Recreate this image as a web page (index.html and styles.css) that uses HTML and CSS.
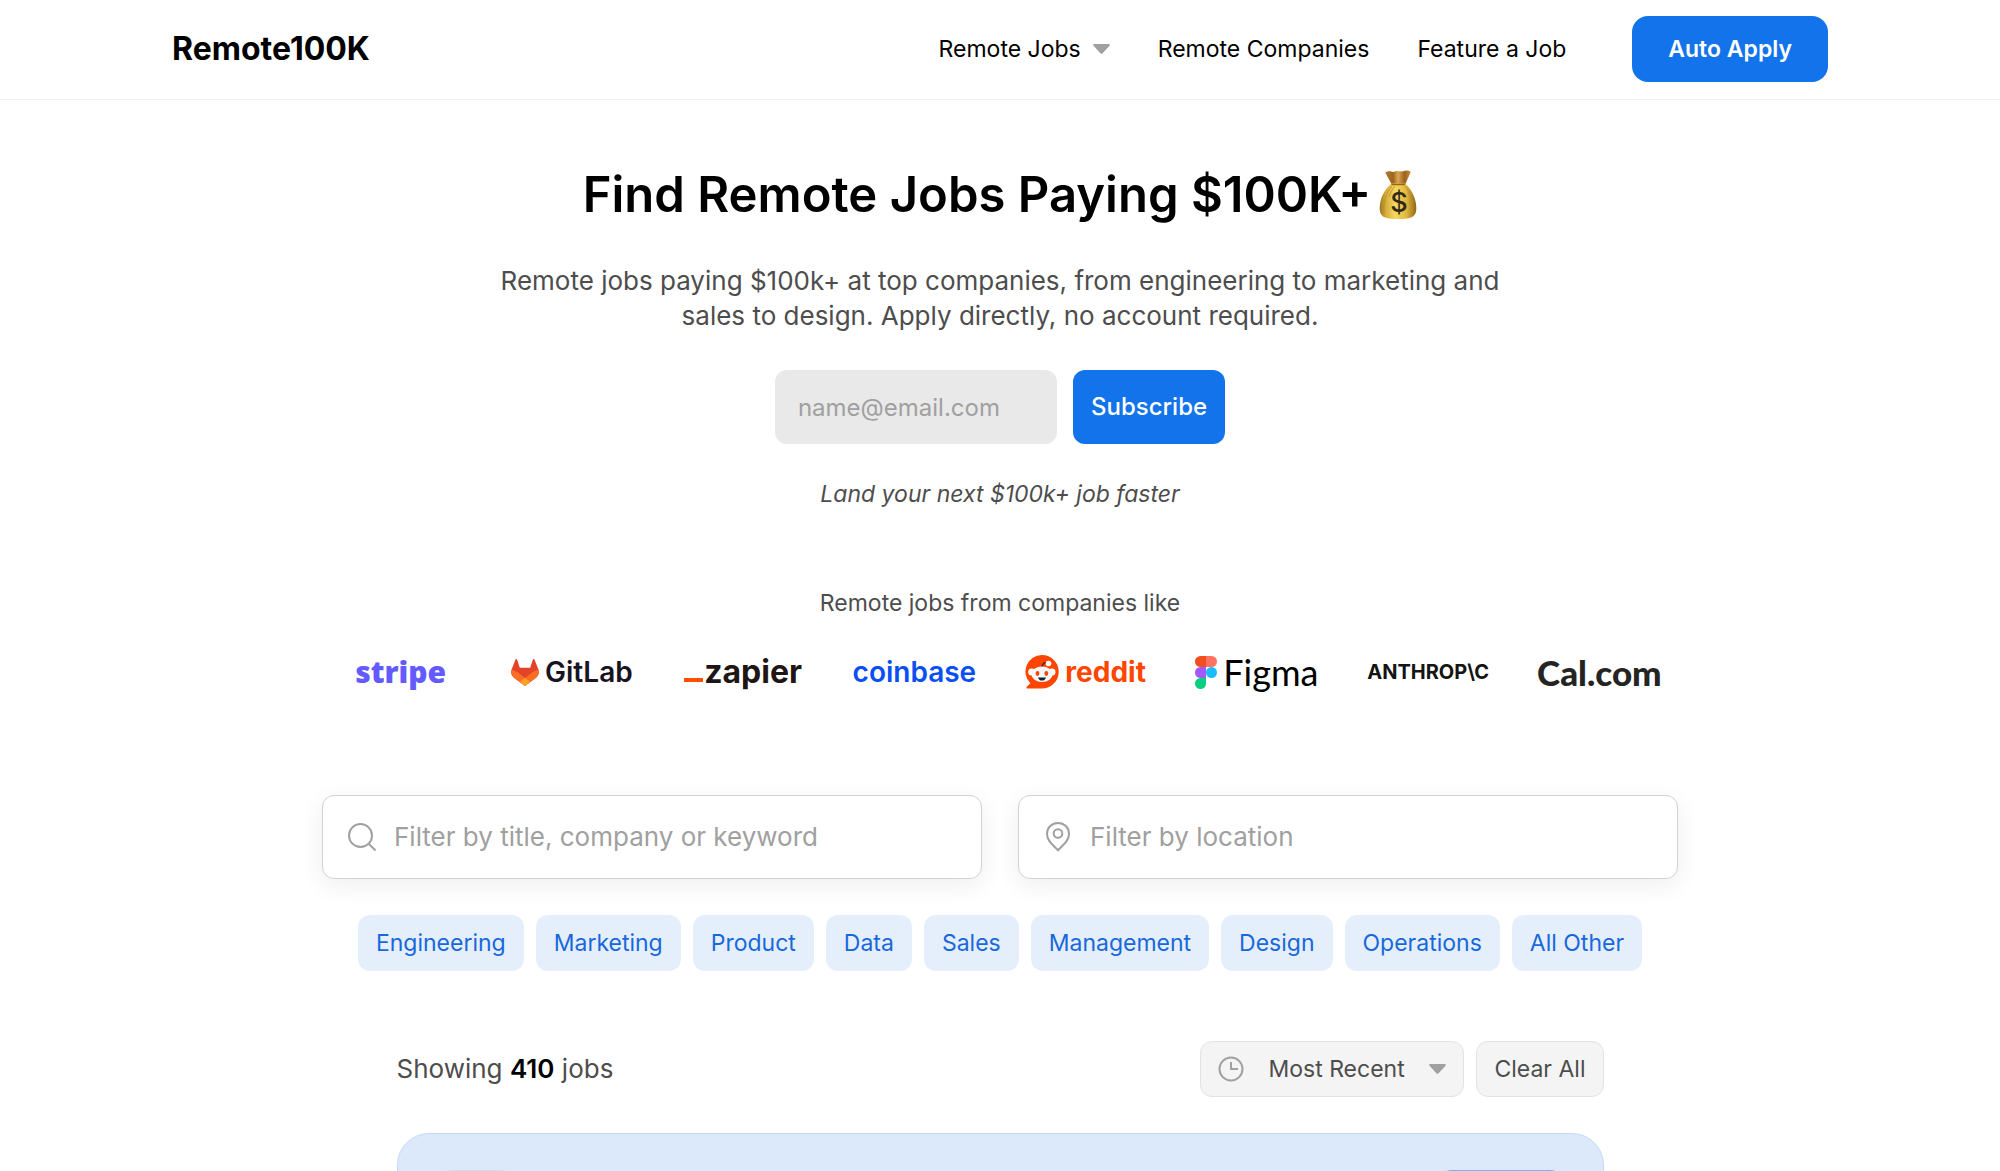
FILE: index.html
```html
<!DOCTYPE html>
<html lang="en">
<head>
  <meta charset="UTF-8">
  <meta name="viewport" content="width=device-width, initial-scale=1.0">
  <title>Remote100K</title>
  <link rel="stylesheet" href="styles.css">
</head>
<body>
  <!-- Header -->
  <header class="site-header">
    <div class="header-inner">
      <a href="#" class="logo">Remote100K</a>
      <nav class="main-nav">
        <a href="#" class="has-menu">Remote Jobs
          <svg class="caret" viewBox="0 0 17 10"><path d="M1.3 0h14.4c1 0 1.5 1 .8 1.7L9.6 9.2c-.6.7-1.6.7-2.2 0L.5 1.7C-.2 1 .3 0 1.3 0z"/></svg>
        </a>
        <a href="#">Remote Companies</a>
        <a href="#">Feature a Job</a>
        <a href="#" class="apply-btn">Auto Apply</a>
      </nav>
    </div>
  </header>

  <main>
    <!-- Hero -->
    <section class="hero">
      <h1>
        <span>Find Remote Jobs Paying $100K+</span>
        <svg class="money-bag" viewBox="0 0 38 50" role="img" aria-label="Money bag">
          <defs>
            <linearGradient id="bag" x1="0" x2="1">
              <stop offset="0" stop-color="#9a7620"/>
              <stop offset=".16" stop-color="#d3ab39"/>
              <stop offset=".42" stop-color="#f6d95f"/>
              <stop offset=".72" stop-color="#e3b93e"/>
              <stop offset="1" stop-color="#8d6817"/>
            </linearGradient>
            <linearGradient id="neck" x1="0" x2="1">
              <stop offset="0" stop-color="#b77b2c"/>
              <stop offset=".3" stop-color="#9a6420"/>
              <stop offset=".5" stop-color="#dda650"/>
              <stop offset=".75" stop-color="#9a6420"/>
              <stop offset="1" stop-color="#c78b3a"/>
            </linearGradient>
          </defs>
          <path fill="url(#neck)" d="M7 2c4-2 6 1 9-.5s5 .8 8-.2 4-.8 7-.1c.8.2.8 1 .4 1.6L26 15H13L6.6 3.2c-.3-.5-.2-1 .4-1.2z"/>
          <path fill="url(#bag)" d="M12.500 13.500h13.500c6 5 11 14 11.300 24 .2 9-4 11.500-18.300 11.500S.5 46.500.7 37.500c.3-10 5.300-19 11.800-24z"/>
          <path fill="none" stroke="#94661b" stroke-width="1.500" d="M12.500 14.500h13.500"/>
          <path fill="none" stroke="#b88c27" stroke-width=".8" d="M13 16C7 23 4 32 5 43M26 16c6 7 8 16 7 27M16 16c-3 4-5 7-6 11"/>
          <text x="20" y="42" text-anchor="middle" class="bag-sign">$</text>
        </svg>
      </h1>
      <p class="lead">Remote jobs paying $100k+ at top companies, from engineering to marketing and sales to design. Apply directly, no account required.</p>
      <form class="subscribe-form">
        <input type="email" name="email" placeholder="name@email.com" aria-label="Email address">
        <button type="submit">Subscribe</button>
      </form>
      <p class="tagline">Land your next $100k+ job faster</p>
    </section>

    <!-- Companies -->
    <section class="companies">
      <p>Remote jobs from companies like</p>
      <div class="brands">
        <span class="brand stripe">stripe</span>
        <span class="brand gitlab">
          <svg width="28" height="27" viewBox="0 0 28 27">
            <path fill="#e24329" d="M27.500 10.700 23.500.6c-.3-.8-1.400-.7-1.600 0l-2.700 8.200H8.800L6.100.6C5.900-.1 4.800-.2 4.500.6l-4 10.100c-1 3 0 6 2.500 8L14 27l11-8.300c2.500-2 3.500-5 2.500-8z"/>
            <path fill="#fc6d26" d="M27.500 10.700c-2.500.5-4.800 1.600-6.800 3.100L14 18.900l-6.700-5.100c-2-1.500-4.300-2.600-6.800-3.100-1 3 0 6 2.500 8L14 27l11-8.300c2.500-2 3.500-5 2.500-8z"/>
            <path fill="#fca326" d="m9 22.700 5 4.300 5-4.300-5-3.800z"/>
          </svg>
          GitLab
        </span>
        <span class="brand zapier"><i class="zapier-bar"></i>zapier</span>
        <span class="brand coinbase">coinbase</span>
        <span class="brand reddit">
          <svg width="34" height="34" viewBox="0 0 34 34">
            <path fill="#ff4500" d="M17 0a16.500 16.500 0 1 1 0 33.500H2.500c-1 0-1.400-1.100-.7-1.700l3.500-3.600A16.500 16.500 0 0 1 17 0z"/>
            <path fill="none" stroke="#6b1d05" stroke-width="1.500" d="M17 12.500c0-3 1.500-4.800 4.500-4.700"/>
            <circle cx="23.500" cy="8.500" r="2.800" fill="#fff"/>
            <circle cx="6.700" cy="17" r="3.500" fill="#fff"/>
            <circle cx="27" cy="17" r="3.500" fill="#fff"/>
            <ellipse cx="17" cy="19.300" rx="10.600" ry="7.800" fill="#f4f8fa"/>
            <ellipse cx="12.500" cy="18.500" rx="1.900" ry="2.400" fill="#ff4500"/>
            <ellipse cx="21.300" cy="18.500" rx="1.900" ry="2.400" fill="#ff4500"/>
            <path fill="#16232b" d="M13 22.500h8c-.5 2-2 3.100-4 3.100s-3.500-1.100-4-3.100z"/>
          </svg>
          reddit
        </span>
        <span class="brand figma">
          <svg width="22" height="33" viewBox="0 0 22 33">
            <path fill="#f24e1e" d="M5.500 0H11v11H5.500a5.500 5.500 0 0 1 0-11z"/>
            <path fill="#ff7262" d="M11 0h5.500a5.500 5.500 0 0 1 0 11H11z"/>
            <path fill="#a259ff" d="M5.500 11H11v11H5.500a5.500 5.500 0 0 1 0-11z"/>
            <circle cx="16.500" cy="16.500" r="5.500" fill="#1abcfe"/>
            <path fill="#0acf83" d="M5.500 22H11v5.500A5.500 5.500 0 1 1 5.500 22z"/>
          </svg>
          Figma
        </span>
        <span class="brand anthropic">ANTHROP\C</span>
        <span class="brand cal">Cal.com</span>
      </div>
    </section>

    <!-- Search filters -->
    <section class="filters">
      <div class="search-row">
        <label class="search-box">
          <svg width="28" height="28" viewBox="0 0 28 28"><circle cx="12.500" cy="12.500" r="11.500"/><path d="m20.500 20.500 7 7"/></svg>
          <input type="text" name="keyword" placeholder="Filter by title, company or keyword" aria-label="Filter by title, company or keyword">
        </label>
        <label class="search-box">
          <svg width="28" height="28" viewBox="0 0 28 28"><path d="M14 0C7.800 0 3 4.600 3 10.900c0 6.800 5.800 10.900 11 16.400 5.200-5.500 11-9.600 11-16.400C25 4.600 20.200 0 14 0z"/><circle cx="14" cy="10.500" r="4.300"/></svg>
          <input type="text" name="location" placeholder="Filter by location" aria-label="Filter by location">
        </label>
      </div>
      <div class="categories">
        <a href="#">Engineering</a>
        <a href="#">Marketing</a>
        <a href="#">Product</a>
        <a href="#">Data</a>
        <a href="#">Sales</a>
        <a href="#">Management</a>
        <a href="#">Design</a>
        <a href="#">Operations</a>
        <a href="#">All Other</a>
      </div>
    </section>

    <!-- Job list -->
    <section class="jobs">
      <div class="jobs-bar">
        <p>Showing <strong>410</strong> jobs</p>
        <div class="jobs-actions">
          <label class="sort">
            <svg class="clock" width="26" height="26" viewBox="0 0 26 26"><circle cx="13" cy="13" r="11.500"/><path d="M13 6v7h7"/></svg>
            <select name="sort" aria-label="Sort jobs">
              <option selected>Most Recent</option>
            </select>
            <svg class="caret" viewBox="0 0 17 10"><path d="M1.3 0h14.4c1 0 1.5 1 .8 1.7L9.6 9.2c-.6.7-1.6.7-2.2 0L.5 1.7C-.2 1 .3 0 1.3 0z"/></svg>
          </label>
          <button type="button" class="clear-btn">Clear All</button>
        </div>
      </div>
      <article class="job-card">
        <span class="job-logo"></span>
        <span class="job-badge"></span>
      </article>
    </section>
  </main>
</body>
</html>
```
FILE: styles.css
```css
/* Reset */
* {
  box-sizing: border-box;
}

body {
  margin: 0;
  height: 100vh;
  overflow: hidden;
  background: #fff;
  color: #4d4d4d;
  font-family: Inter, "Liberation Sans", sans-serif;
  font-size: 23px;
  line-height: 32px;
}

h1, p {
  margin: 0;
}

a {
  color: inherit;
  text-decoration: none;
}

input, select, button {
  font: inherit;
  border: none;
}

svg {
  flex: none;
}

.caret {
  width: 17px;
  height: 10px;
  fill: #a0a0a0;
}

/* Header */
.site-header {
  height: 100px;
  padding: 0 24px;
  border-bottom: 1px solid #f2f2f2;
}

.header-inner {
  display: flex;
  justify-content: space-between;
  align-items: center;
  max-width: 1656px;
  height: 98px;
  margin: 0 auto;
}

.logo {
  color: #000;
  font-size: 32px;
  font-weight: 700;
}

.main-nav {
  display: flex;
  align-items: center;
  gap: 48px;
  color: #000;
}

.has-menu {
  display: flex;
  align-items: center;
  gap: 12px;
}

.apply-btn {
  margin-left: 18px;
  padding: 17px 36px;
  border-radius: 16px;
  background: #1273eb;
  color: #fff;
  font-weight: 600;
}

/* Hero */
.hero {
  display: flex;
  flex-direction: column;
  align-items: center;
  padding: 60px 24px 0;
  text-align: center;
}

h1 {
  display: flex;
  align-items: center;
  gap: 8px;
  color: #000;
  font-size: 49px;
  font-weight: 600;
  line-height: 70px;
}

.money-bag {
  width: 38px;
  height: 50px;
}

.bag-sign {
  fill: #33291a;
  font-size: 27px;
  font-weight: 500;
}

.lead {
  max-width: 1040px;
  margin-top: 33px;
  font-size: 26px;
  line-height: 35px;
}

.subscribe-form {
  display: flex;
  gap: 16px;
  margin-top: 37px;
  font-size: 24px;
}

.subscribe-form input {
  width: 282px;
  height: 74px;
  padding: 0 23px;
  border-radius: 12px;
  background: #e9e9e9;
}

::placeholder {
  color: #a0a0a0;
  opacity: 1;
}

.subscribe-form button {
  padding: 0 18px;
  border-radius: 12px;
  background: #1273eb;
  color: #fff;
  font-weight: 500;
}

.tagline {
  margin-top: 34px;
  font-style: italic;
}

/* Companies */
.companies {
  margin-top: 77px;
  text-align: center;
}

.brands {
  display: grid;
  grid-template-columns: repeat(8, 1fr);
  max-width: 1370px;
  margin: 29px auto 0;
}

.brand {
  display: flex;
  justify-content: center;
  align-items: center;
  height: 48px;
  line-height: 48px;
  white-space: nowrap;
}

.stripe {
  color: #635bff;
  font-family: "Open Sans", sans-serif;
  font-size: 30px;
  font-weight: 800;
}

.gitlab {
  gap: 6px;
  color: #171321;
  font-size: 28px;
  font-weight: 600;
}

.zapier {
  color: #201515;
  font-size: 32px;
  font-weight: 700;
}

.zapier-bar {
  align-self: flex-end;
  width: 19px;
  height: 4px;
  margin: 0 1px 14px 0;
  background: #ff4f00;
}

.coinbase {
  color: #0a4ff5;
  font-size: 28px;
  font-weight: 600;
}

.reddit {
  gap: 6px;
  color: #ff4500;
  font-size: 28px;
  font-weight: 700;
}

.figma {
  gap: 6px;
  color: #000;
  font-family: Lato, sans-serif;
  font-size: 36px;
}

.anthropic {
  color: #141413;
  font-size: 20px;
  font-weight: 700;
}

.cal {
  color: #242424;
  font-family: Lato, sans-serif;
  font-size: 35px;
  font-weight: 900;
}

/* Search filters */
.filters {
  max-width: 1404px;
  margin: 99px auto 0;
  padding: 0 24px;
}

.search-row {
  display: grid;
  grid-template-columns: 1fr 1fr;
  gap: 36px;
}

.search-box {
  display: flex;
  align-items: center;
  gap: 18px;
  height: 84px;
  padding: 0 25px;
  border: 1px solid #d2d2d2;
  border-radius: 12px;
  background: #fff;
  box-shadow: 0 6px 24px rgba(0, 0, 0, 0.07);
}

.search-box svg,
.clock {
  fill: none;
  overflow: visible;
  stroke: #a0a0a0;
  stroke-width: 2;
}

.search-box input {
  flex: 1;
  min-width: 0;
  padding: 0;
  background: none;
  font-size: 26px;
}

.categories {
  display: flex;
  flex-wrap: wrap;
  justify-content: center;
  gap: 12px;
  margin-top: 36px;
}

.categories a {
  padding: 12px 18px;
  border-radius: 12px;
  background: #e5effc;
  color: #1868db;
}

/* Job list */
.jobs {
  max-width: 1255px;
  margin: 70px auto 0;
  padding: 0 24px;
}

.jobs-bar {
  display: flex;
  justify-content: space-between;
  align-items: center;
}

.jobs-bar p {
  font-size: 26px;
}

.jobs-bar strong {
  color: #000;
  font-weight: 600;
}

.jobs-actions {
  display: flex;
  gap: 12px;
}

.sort,
.clear-btn {
  display: flex;
  align-items: center;
  height: 56px;
  padding: 0 17px;
  border: 1px solid #e2e2e2;
  border-radius: 12px;
  background: #f4f4f4;
  color: #4d4d4d;
}

.sort {
  gap: 24px;
}

.sort select {
  padding: 0;
  background: none;
  color: inherit;
  appearance: none;
}

.job-card {
  display: flex;
  justify-content: space-between;
  height: 240px;
  margin-top: 36px;
  padding: 36px 42px;
  border: 1px solid #c5d9f3;
  border-radius: 32px;
  background: #dce9fb;
}

.job-logo {
  width: 72px;
  height: 72px;
  border-radius: 12px;
  background: #cfd8e8;
}

.job-badge {
  width: 120px;
  height: 40px;
  border-radius: 10px;
  background: #7fb0f5;
}
```
